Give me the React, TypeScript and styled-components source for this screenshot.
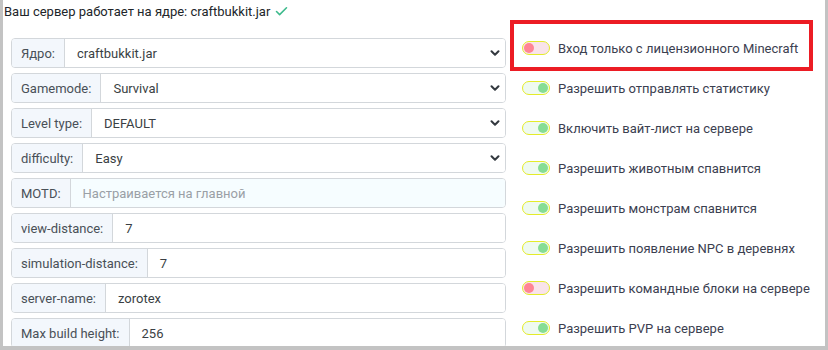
import React from 'react';
import styled, { createGlobalStyle } from 'styled-components';
import { Check, ChevronDown } from 'lucide-react';

const GlobalStyle = createGlobalStyle`
  body {
    margin: 0;
    font-family: Roboto, "Noto Sans", sans-serif;
    background: #fff;
  }
`;

const Frame = styled.div`
  width: 828px;
  height: 350px;
  box-sizing: border-box;
  border-left: 3px solid #c3c3c3;
  border-right: 3px solid #c3c3c3;
  border-bottom: 4px solid #c3c3c3;
  background: #fff;
  overflow: hidden;
`;

const Header = styled.div`
  display: flex;
  align-items: center;
  gap: 4px;
  height: 22px;
  padding: 0 0 0 1px;
  font-size: 13px;
  color: #212529;
`;

const Body = styled.div`
  display: grid;
  grid-template-columns: 495px 303px;
  column-gap: 4px;
  padding-left: 8px;
`;

const FieldColumn = styled.div`
  display: flex;
  flex-direction: column;
  gap: 5px;
  margin-top: 16px;
`;

const InputGroup = styled.div`
  display: flex;
  height: 30px;
  box-sizing: border-box;
  border: 1px solid #d3d7db;
  border-radius: 4px;
  overflow: hidden;
  font-size: 13px;
`;

const Addon = styled.div`
  display: flex;
  align-items: center;
  padding: 0 9px;
  background: #f3f7fc;
  border-right: 1px solid #d3d7db;
  color: #495057;
  white-space: nowrap;
`;

const Field = styled.div<{ $readonly?: boolean }>`
  flex: 1;
  display: flex;
  align-items: center;
  justify-content: space-between;
  padding: 0 3px 0 12px;
  background: ${p => (p.$readonly ? '#f6fdff' : '#fff')};
  color: #3a3f44;
`;

const Placeholder = styled.span`
  color: #9aa0a6;
`;

const ToggleColumn = styled.div`
  display: flex;
  flex-direction: column;
  margin-top: 6px;
`;

const ToggleRow = styled.div<{ $highlight?: boolean }>`
  position: relative;
  display: flex;
  align-items: center;
  gap: 8px;
  height: 40px;
  padding-left: 12px;
  font-size: 13px;
  color: #3b4050;
  white-space: nowrap;

  ${p =>
    p.$highlight &&
    `
    &::after {
      content: '';
      position: absolute;
      top: -8px;
      bottom: -3px;
      left: 0;
      right: 0;
      border: 4px solid #ec1c24;
    }
  `}
`;

const Switch = styled.span<{ $on: boolean }>`
  position: relative;
  flex: none;
  display: inline-block;
  width: 28px;
  height: 14px;
  box-sizing: border-box;
  border: 1.5px solid #e4ec2a;
  border-radius: 7px;
  background: ${p => (p.$on ? '#effaf1' : '#f9e3ea')};

  &::before {
    content: '';
    position: absolute;
    top: 0.5px;
    ${p => (p.$on ? 'right: 1px;' : 'left: 1px;')}
    width: 10px;
    height: 10px;
    border-radius: 50%;
    background: ${p => (p.$on ? '#86dd94' : '#ff8595')};
  }
`;

type FieldDef = { label: string; value?: string; placeholder?: string; select?: boolean };

const fields: FieldDef[] = [
  { label: 'Ядро:', value: 'craftbukkit.jar', select: true },
  { label: 'Gamemode:', value: 'Survival', select: true },
  { label: 'Level type:', value: 'DEFAULT', select: true },
  { label: 'difficulty:', value: 'Easy', select: true },
  { label: 'MOTD:', placeholder: 'Настраивается на главной' },
  { label: 'view-distance:', value: '7' },
  { label: 'simulation-distance:', value: '7' },
  { label: 'server-name:', value: 'zorotex' },
  { label: 'Max build height:', value: '256' },
];

const toggles = [
  { label: 'Вход только с лицензионного Minecraft', on: false, highlight: true },
  { label: 'Разрешить отправлять статистику', on: true },
  { label: 'Включить вайт-лист на сервере', on: true },
  { label: 'Разрешить животным спавнится', on: true },
  { label: 'Разрешить монстрам спавнится', on: true },
  { label: 'Разрешить появление NPC в деревнях', on: true },
  { label: 'Разрешить командные блоки на сервере', on: false },
  { label: 'Разрешить PVP на сервере', on: true },
];

export default function App() {
  return (
    <>
      <GlobalStyle />
      <Frame>
        <Header>
          Ваш сервер работает на ядре: craftbukkit.jar
          <Check size={15} color="#3dba8c" strokeWidth={2.5} />
        </Header>
        <Body>
          <FieldColumn>
            {fields.map(f => (
              <InputGroup key={f.label}>
                <Addon>{f.label}</Addon>
                <Field $readonly={!!f.placeholder}>
                  {f.placeholder ? <Placeholder>{f.placeholder}</Placeholder> : <span>{f.value}</span>}
                  {f.select && <ChevronDown size={14} color="#343a40" strokeWidth={3.5} />}
                </Field>
              </InputGroup>
            ))}
          </FieldColumn>
          <ToggleColumn>
            {toggles.map(t => (
              <ToggleRow key={t.label} $highlight={t.highlight}>
                <Switch $on={t.on} />
                {t.label}
              </ToggleRow>
            ))}
          </ToggleColumn>
        </Body>
      </Frame>
    </>
  );
}
